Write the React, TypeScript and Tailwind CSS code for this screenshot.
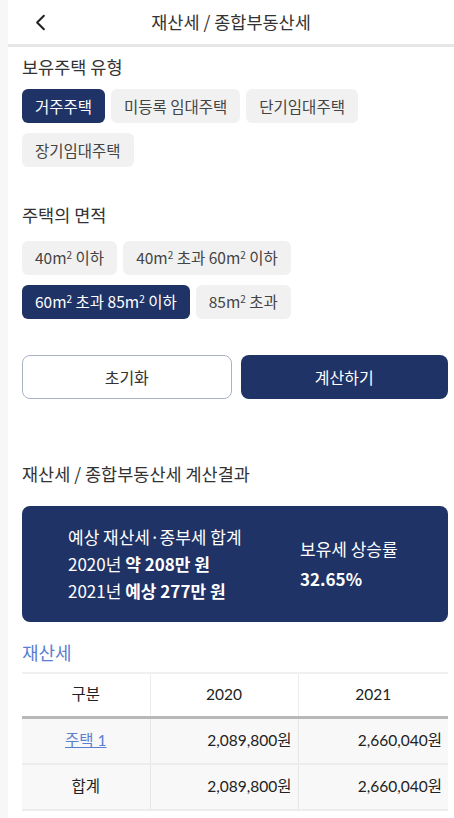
import { ChevronLeft } from "lucide-react";

const houseTypes = ["거주주택", "미등록 임대주택", "단기임대주택", "장기임대주택"];
const areas = [
  { key: "a", parts: ["40m", " 이하"] },
  { key: "b", parts: ["40m", " 초과 60m", " 이하"] },
  { key: "c", parts: ["60m", " 초과 85m", " 이하"] },
  { key: "d", parts: ["85m", " 초과"] },
];

function Sq({ parts }: { parts: string[] }) {
  return (
    <>
      {parts.map((p, i) => (
        <span key={i}>
          {p}
          {i < parts.length - 1 ? <sup className="text-[10px]">2</sup> : null}
        </span>
      ))}
    </>
  );
}

function Chip({ active, children }: { active?: boolean; children: React.ReactNode }) {
  return (
    <button
      className={
        active
          ? "h-[34px] rounded-md bg-[#1f3366] px-[13px] text-[15.5px] text-white"
          : "h-[34px] rounded-md bg-[#f1f1f1] px-[13px] text-[15.5px] text-[#444]"
      }
    >
      {children}
    </button>
  );
}

export default function App() {
  return (
    <div className="flex min-h-[818px] w-[454px] bg-[#f7f7f7] font-['Noto_Sans_CJK_KR','Noto_Sans',sans-serif] text-[#333]">
      <div className="ml-2 flex flex-1 flex-col bg-white">
        <header className="relative flex h-[47px] items-center justify-center border-b-[3px] border-[#e6e6e6]">
          <ChevronLeft className="absolute left-[19px] h-[27px] w-[27px] text-[#222]" strokeWidth={1.8} />
          <h1 className="text-[17.5px] text-[#333]">재산세 / 종합부동산세</h1>
        </header>

        <main className="flex flex-col pl-[14px] pr-[6px]">
          <h2 className="mt-[7px] text-[17.5px] text-[#333]">보유주택 유형</h2>
          <div className="mt-[9px] flex flex-wrap gap-x-[6px] gap-y-[10px]">
            {houseTypes.map((t, i) => (
              <Chip key={t} active={i === 0}>
                {t}
              </Chip>
            ))}
          </div>

          <h2 className="mt-[35px] text-[17.5px] text-[#333]">주택의 면적</h2>
          <div className="mt-[12px] flex flex-wrap gap-x-[6px] gap-y-[10px]">
            {areas.map((a) => (
              <Chip key={a.key} active={a.key === "c"}>
                <Sq parts={a.parts} />
              </Chip>
            ))}
          </div>

          <div className="mt-[36px] flex gap-[9px]">
            <button className="h-[44px] flex-1 rounded-lg border border-[#aab3c5] bg-white text-[16px] text-[#333]">
              초기화
            </button>
            <button className="h-[44px] flex-1 rounded-lg bg-[#1f3366] text-[16px] text-white">
              계산하기
            </button>
          </div>

          <h2 className="mt-[62px] text-[17.5px] text-[#333]">재산세 / 종합부동산세 계산결과</h2>

          <section className="mt-[19px] flex h-[116px] items-center rounded-lg bg-[#1f3366] pl-[46px] text-white">
            <div className="flex w-[232px] flex-col gap-[2px] text-[17px] leading-[25px]">
              <p>예상 재산세·종부세 합계</p>
              <p>
                2020년 <b>약 208만 원</b>
              </p>
              <p>
                2021년 <b>예상 277만 원</b>
              </p>
            </div>
            <div className="flex flex-col gap-[5px] text-[17px] leading-[25px]">
              <p>보유세 상승률</p>
              <p className="font-bold">32.65%</p>
            </div>
          </section>

          <h3 className="mt-[17px] text-[18px] text-[#5a7fd1]">재산세</h3>

          <table className="mt-[6px] w-full border-collapse font-['Lato','Noto_Sans_CJK_KR',sans-serif] text-[15.5px] text-[#222]">
            <thead>
              <tr className="h-[45px] border-t-2 border-b-[3px] border-t-[#f0f0f0] border-b-[#b8b8b8]">
                <th className="w-[128px] border-r border-[#ececec] font-normal">구분</th>
                <th className="w-[148px] border-r border-[#ececec] font-normal">2020</th>
                <th className="font-normal">2021</th>
              </tr>
            </thead>
            <tbody className="bg-[#f8f8f8]">
              <tr className="h-[46px] border-b-2 border-[#ececec]">
                <td className="border-r border-[#e6e6e6] text-center">
                  <a className="text-[#5a7fd1] underline">주택 1</a>
                </td>
                <td className="border-r border-[#e6e6e6] pr-[6px] text-right">2,089,800원</td>
                <td className="pr-[6px] text-right">2,660,040원</td>
              </tr>
              <tr className="h-[46px] border-b-2 border-[#ececec]">
                <td className="border-r border-[#e6e6e6] text-center">합계</td>
                <td className="border-r border-[#e6e6e6] pr-[6px] text-right">2,089,800원</td>
                <td className="pr-[6px] text-right">2,660,040원</td>
              </tr>
            </tbody>
          </table>
        </main>
      </div>
    </div>
  );
}
